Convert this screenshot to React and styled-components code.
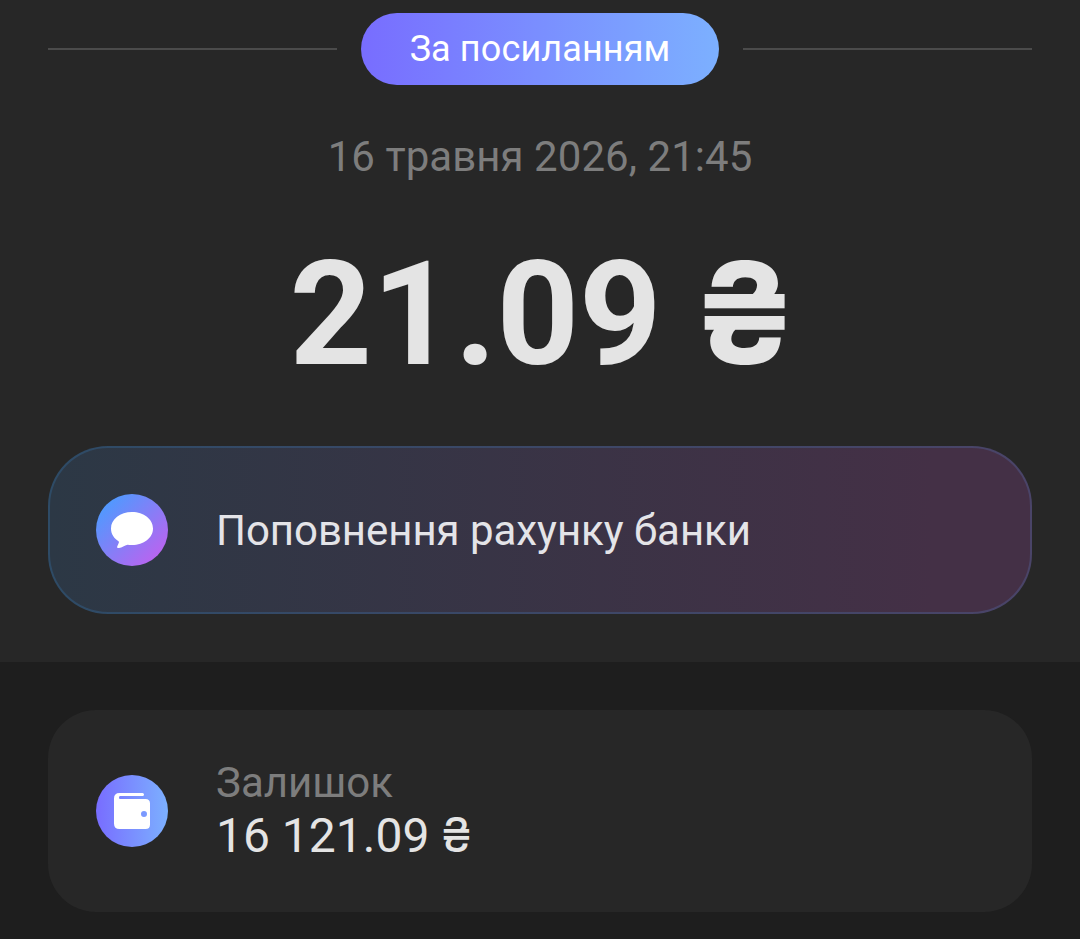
import React from "react";
import styled, { createGlobalStyle } from "styled-components";

const GlobalStyle = createGlobalStyle`
  * { box-sizing: border-box; }
  body { margin: 0; background: #1e1e1e; font-family: Roboto, Inter, sans-serif; }
`;

const Screen = styled.main`
  width: 1080px;
  height: 939px;
  overflow: hidden;
  background: #1e1e1e;
`;

const Summary = styled.section`
  display: flex;
  flex-direction: column;
  align-items: center;
  height: 662px;
  padding: 13px 48px 48px;
  background: #272727;
`;

const TagRow = styled.div`
  display: flex;
  align-items: center;
  gap: 24px;
  width: 100%;
`;

const Rule = styled.span`
  flex: 1;
  height: 2px;
  background: #4b4b4b;
`;

const Tag = styled.span`
  width: 358px;
  height: 72px;
  border-radius: 36px;
  background: linear-gradient(90deg, #786dff, #7cb0ff);
  color: #fff;
  font-size: 36px;
  line-height: 72px;
  letter-spacing: 0.12px;
  text-align: center;
`;

const DateLine = styled.time`
  margin-top: 47px;
  color: #7d7d7d;
  font-size: 42px;
  line-height: 49px;
  letter-spacing: 0.05px;
`;

const Amount = styled.h1`
  margin: 49px 0 0;
  color: #e4e4e4;
  font-size: 144px;
  font-weight: 700;
  line-height: 169px;
  white-space: nowrap;
`;

const Currency = styled.span`
  margin: 0 -6px 0 -5px;
  font-size: 141px;
  line-height: 1;
`;

const Card = styled.div`
  display: flex;
  align-items: center;
  gap: 48px;
  padding: 0 48px;
`;

const CommentCard = styled(Card)`
  width: 100%;
  height: 168px;
  margin-top: auto;
  padding: 0 46px;
  border: 2px solid transparent;
  border-radius: 60px;
  background:
    linear-gradient(90deg, #2c3845, #443046 90%) padding-box,
    linear-gradient(90deg, #2e4b66, #4a4468) border-box;
`;

const Comment = styled.p`
  margin: 0;
  color: #e4e4e8;
  font-size: 42px;
  line-height: 49px;
  letter-spacing: -0.05px;
`;

const BalanceCard = styled(Card)`
  height: 202px;
  margin: 48px 48px 0;
  border-radius: 48px;
  background: #272727;
`;

const Icon = styled.svg`
  flex: none;
  width: 72px;
  height: 72px;
`;

const Label = styled.div`
  color: #7d7d7d;
  font-size: 42px;
  line-height: 48px;
`;

const Balance = styled.div`
  color: #e4e4e4;
  font-size: 48px;
  line-height: 57px;
`;

export default function App() {
  return (
    <Screen>
      <GlobalStyle />
      <Summary>
        <TagRow><Rule /><Tag>За посиланням</Tag><Rule /></TagRow>
        <DateLine>16 травня 2026, 21:45</DateLine>
        <Amount>21.09 <Currency>₴</Currency></Amount>
        <CommentCard>
          <Icon viewBox="0 0 72 72">
            <defs>
              <linearGradient id="chat" x1="0.1" y1="0.1" x2="0.9" y2="0.9">
                <stop stopColor="#4b9cff" /><stop offset="1" stopColor="#bd62ef" />
              </linearGradient>
            </defs>
            <circle cx="36" cy="36" r="36" fill="url(#chat)" />
            <path fill="#fff" d="M36 18C24.200 18 15 25.200 15 34.500C15 40 18 44.300 22.500 47.300C23.200 48 23 48.700 22.300 50L21.300 52.300C20.700 53.700 21.500 54.300 23 54C26 53.500 28.500 51.800 31.500 50.800C33 51 34.500 51 36 51C47.800 51 57 43.800 57 34.500C57 25.200 47.800 18 36 18Z" />
          </Icon>
          <Comment>Поповнення рахунку банки</Comment>
        </CommentCard>
      </Summary>
      <BalanceCard>
        <Icon viewBox="0 0 72 72">
          <defs>
            <linearGradient id="wallet">
              <stop stopColor="#786dff" /><stop offset="1" stopColor="#7cb0ff" />
            </linearGradient>
          </defs>
          <circle cx="36" cy="36" r="36" fill="url(#wallet)" />
          <path fill="#fff" fillRule="evenodd" d="M23.500 18H46.500Q48 18 48 19.500T46.500 21H24Q23 21 23 22.500T24 24H49.500Q54 24 54 28.500V49.500Q54 54 49.500 54H23.500Q18 54 18 48.500V23.500Q18 18 23.500 18ZM48 36A3 3 0 1 0 48 42A3 3 0 1 0 48 36Z" />
        </Icon>
        <div>
          <Label>Залишок</Label>
          <Balance>16 121.09 ₴</Balance>
        </div>
      </BalanceCard>
    </Screen>
  );
}
